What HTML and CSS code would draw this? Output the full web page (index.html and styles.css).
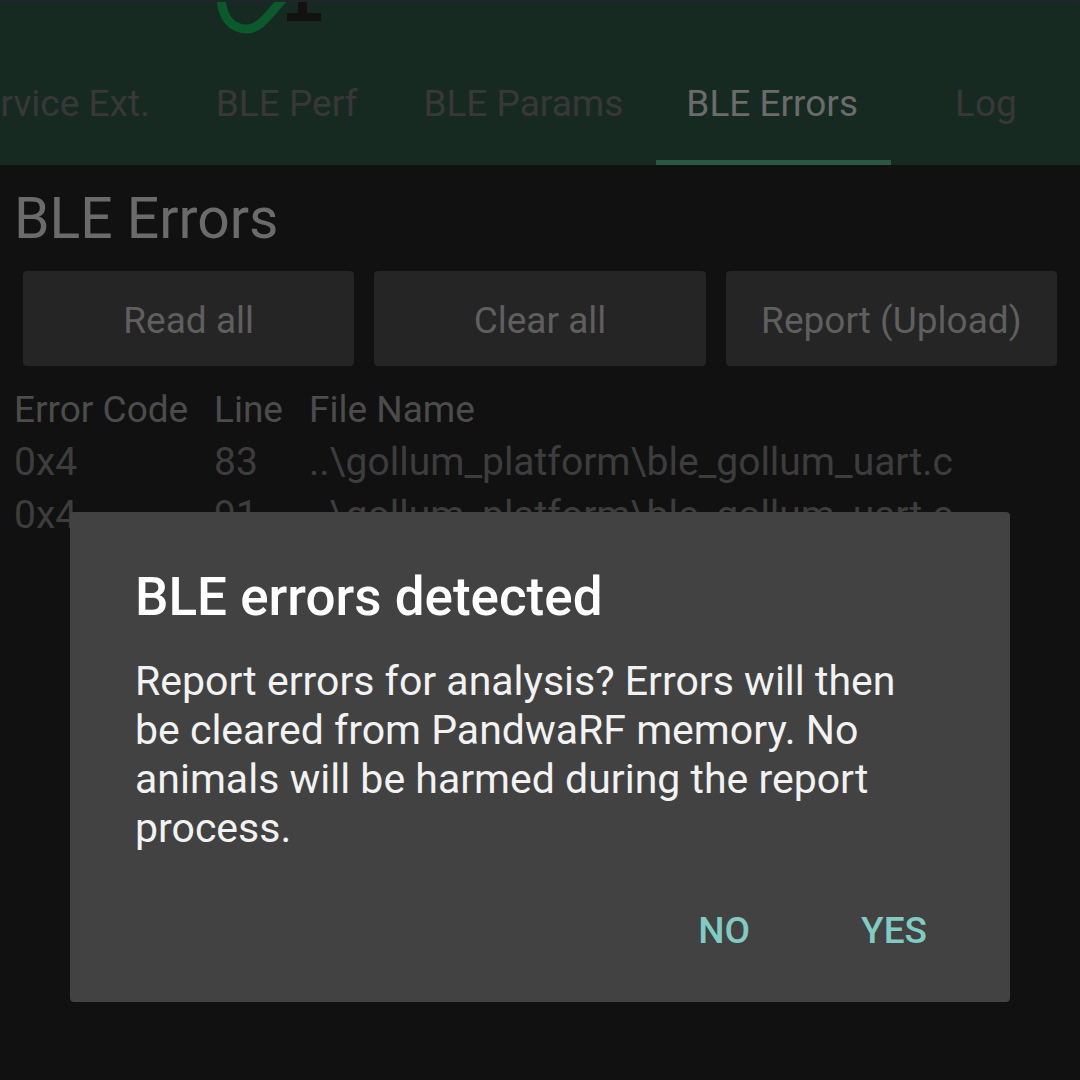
FILE: index.html
```html
<!DOCTYPE html>
<html>
<head>
<meta charset="utf-8">
<link rel="stylesheet" href="styles.css">
</head>
<body>
<div class="screen">
  <header class="appbar">
    <div class="logo-row">
      <svg class="logo" width="340" height="40" viewBox="0 0 340 40">
        <path d="M221,-6 C221,18 232,29 247,29 C260,29 269,14 284,-2" fill="none" stroke="#0a5a2c" stroke-width="9" stroke-linecap="round"/>
        <rect x="287" y="13" width="34" height="8" fill="#121212"/>
        <rect x="298" y="0" width="9" height="14" fill="#121212"/>
      </svg>
    </div>
    <nav class="tabs">
      <div class="tab">Service Ext.</div>
      <div class="tab">BLE Perf</div>
      <div class="tab">BLE Params</div>
      <div class="tab active">BLE Errors</div>
      <div class="tab tab-log">Log</div>
    </nav>
  </header>

  <main class="content">
    <h1 class="title">BLE Errors</h1>
    <div class="actions">
      <div class="btn">Read all</div>
      <div class="btn">Clear all</div>
      <div class="btn">Report (Upload)</div>
    </div>
    <div class="table">
      <div class="cell head">Error Code</div>
      <div class="cell head">Line</div>
      <div class="cell head">File Name</div>
      <div class="cell">0x4</div>
      <div class="cell">83</div>
      <div class="cell">..\gollum_platform\ble_gollum_uart.c</div>
      <div class="cell">0x4</div>
      <div class="cell">91</div>
      <div class="cell">..\gollum_platform\ble_gollum_uart.c</div>
    </div>
  </main>

  <div class="dialog">
    <h2 class="dialog-title">BLE errors detected</h2>
    <p class="dialog-body">Report errors for analysis? Errors will then be cleared from PandwaRF memory. No animals will be harmed during the report process.</p>
    <div class="dialog-actions">
      <div class="dlg-btn">NO</div>
      <div class="dlg-btn">YES</div>
    </div>
  </div>
</div>
</body>
</html>
```

FILE: styles.css
```css
html, body {
  margin: 0;
  padding: 0;
  background: #111111;
}

.screen {
  position: relative;
  width: 1080px;
  height: 1080px;
  overflow: hidden;
  background: #111111;
  font-family: Roboto, "Noto Sans", sans-serif;
}

.appbar {
  height: 165px;
  box-sizing: border-box;
  border-top: 2px solid #1f262b;
  background: #172a22;
  display: flex;
  flex-direction: column;
}

.logo-row {
  height: 38px;
  overflow: hidden;
}

.logo {
  display: block;
  margin-top: -2px;
}

.tabs {
  flex: 1;
  display: flex;
  margin-left: -74px;
  white-space: nowrap;
}

.tab {
  box-sizing: border-box;
  padding: 6px 33px 0;
  display: flex;
  align-items: center;
  font-size: 37px;
  color: #383838;
  border-bottom: 5px solid transparent;
}

.tab.active {
  padding-left: 30px;
  color: #6b6b6b;
  border-bottom-color: #2a5843;
}

.tab-log {
  padding-left: 64px;
}

.content {
  padding-top: 21px;
}

.title {
  margin: 0 0 0 14px;
  font-size: 57px;
  font-weight: 400;
  line-height: 66px;
  color: #6b6b6b;
}

.actions {
  display: flex;
  gap: 20px;
  padding: 0 23px;
  margin-top: 19px;
}

.btn {
  flex: 1;
  height: 95px;
  border-radius: 4px;
  background: #252525;
  color: #5f5f5f;
  font-size: 37px;
  display: flex;
  align-items: center;
  justify-content: center;
  padding-top: 3px;
  box-sizing: border-box;
}

.table {
  display: grid;
  grid-template-columns: 200px 95px auto;
  grid-auto-rows: 53px;
  padding-left: 14px;
  margin-top: 17px;
}

.cell {
  font-size: 39px;
  line-height: 53px;
  color: #3d3d3d;
  white-space: nowrap;
}

.cell.head {
  font-size: 37px;
  color: #4c4c4c;
}

.dialog {
  position: absolute;
  left: 70px;
  top: 512px;
  width: 940px;
  height: 490px;
  box-sizing: border-box;
  padding: 55px 75px 32px 65px;
  background: #424242;
  border-radius: 4px;
  display: flex;
  flex-direction: column;
}

.dialog-title {
  margin: 0;
  font-size: 53px;
  font-weight: 500;
  line-height: 60px;
  color: #ffffff;
}

.dialog-body {
  margin: 30px 0 0 0;
  font-size: 41px;
  line-height: 49px;
  color: #f2f2f2;
}

.dialog-actions {
  margin-top: auto;
  height: 80px;
  display: flex;
  justify-content: flex-end;
  align-items: center;
  gap: 111px;
  padding-right: 8px;
}

.dlg-btn {
  font-size: 37px;
  font-weight: 500;
  color: #80cbc4;
}
```
